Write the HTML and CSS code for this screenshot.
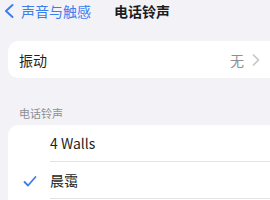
FILE: index.html
```html
<!DOCTYPE html>
<html lang="zh">
<head>
<meta charset="utf-8">
<link rel="stylesheet" href="styles.css">
</head>
<body>
<div class="screen">
  <div class="nav">
    <svg class="back-icon" width="12" height="22" viewBox="0 0 12 22"><polyline points="10.5,5 4,11 10.5,17" fill="none" stroke="#3a7ef0" stroke-width="2" stroke-linecap="round" stroke-linejoin="round"/></svg>
    <span class="back-label">声音与触感</span>
    <span class="title">电话铃声</span>
  </div>

  <div class="card">
    <div class="row">
      <span class="label">振动</span>
      <span class="value">无</span>
      <svg class="disclosure" width="8" height="12" viewBox="0 0 8 12"><polyline points="1.5,1 6.5,6 1.5,11" fill="none" stroke="#c4c4c8" stroke-width="1.6" stroke-linecap="round" stroke-linejoin="round"/></svg>
    </div>
  </div>

  <div class="section-header">电话铃声</div>

  <div class="card">
    <div class="tone">
      <span class="check"></span>
      <div class="tone-body"><span class="label">4 Walls</span></div>
    </div>
    <div class="tone">
      <span class="check"><svg width="14" height="14" viewBox="0 0 14 14"><polyline points="1.5,8 5,11.5 12.5,3" fill="none" stroke="#3a7ef0" stroke-width="1.8" stroke-linecap="round" stroke-linejoin="round"/></svg></span>
      <div class="tone-body"><span class="label">晨霭</span></div>
    </div>
    <div class="tone">
      <span class="check"></span>
      <div class="tone-body"><span class="label">&nbsp;</span></div>
    </div>
  </div>
</div>
</body>
</html>
```

FILE: styles.css
```css
html, body {
  margin: 0;
  padding: 0;
}
body {
  width: 270px;
  height: 200px;
  overflow: hidden;
  background: #f2f2f7;
  font-family: "Noto Sans CJK SC", "Noto Sans", sans-serif;
  color: #1f1f21;
}
.screen {
  display: flex;
  flex-direction: column;
  width: 270px;
  overflow: hidden;
}
.nav {
  display: flex;
  align-items: center;
  height: 22px;
  padding-left: 1px;
}
.back-icon {
  display: block;
  flex: none;
  margin-left: 1px;
}
.back-label {
  margin-left: 7px;
  font-size: 14px;
  line-height: 22px;
  color: #3a7ef0;
}
.title {
  margin-left: 23px;
  font-size: 14px;
  font-weight: 700;
  line-height: 22px;
  color: #1c1c1e;
}
.card {
  margin: 19px -14px 0 8px;
  background: #ffffff;
  border-radius: 10px;
}
.row {
  display: flex;
  align-items: center;
  height: 37px;
  padding: 0 24px 0 11px;
}
.label {
  font-size: 14px;
  line-height: 20px;
  flex: 1;
}
.value {
  font-size: 14px;
  line-height: 20px;
  color: #8e8e93;
}
.disclosure {
  display: block;
  margin-left: 8px;
}
.section-header {
  padding: 27px 0 4px 19px;
  font-size: 11px;
  line-height: 16px;
  color: #8e8e93;
}
.section-header + .card {
  margin-top: 0;
}
.tone {
  display: flex;
  height: 37px;
}
.check {
  flex: none;
  width: 42px;
  display: flex;
  align-items: center;
  padding-left: 15px;
  box-sizing: border-box;
}
.check svg {
  display: block;
}
.tone-body {
  flex: 1;
  display: flex;
  align-items: center;
  border-bottom: 1px solid #e3e3e7;
}
```
